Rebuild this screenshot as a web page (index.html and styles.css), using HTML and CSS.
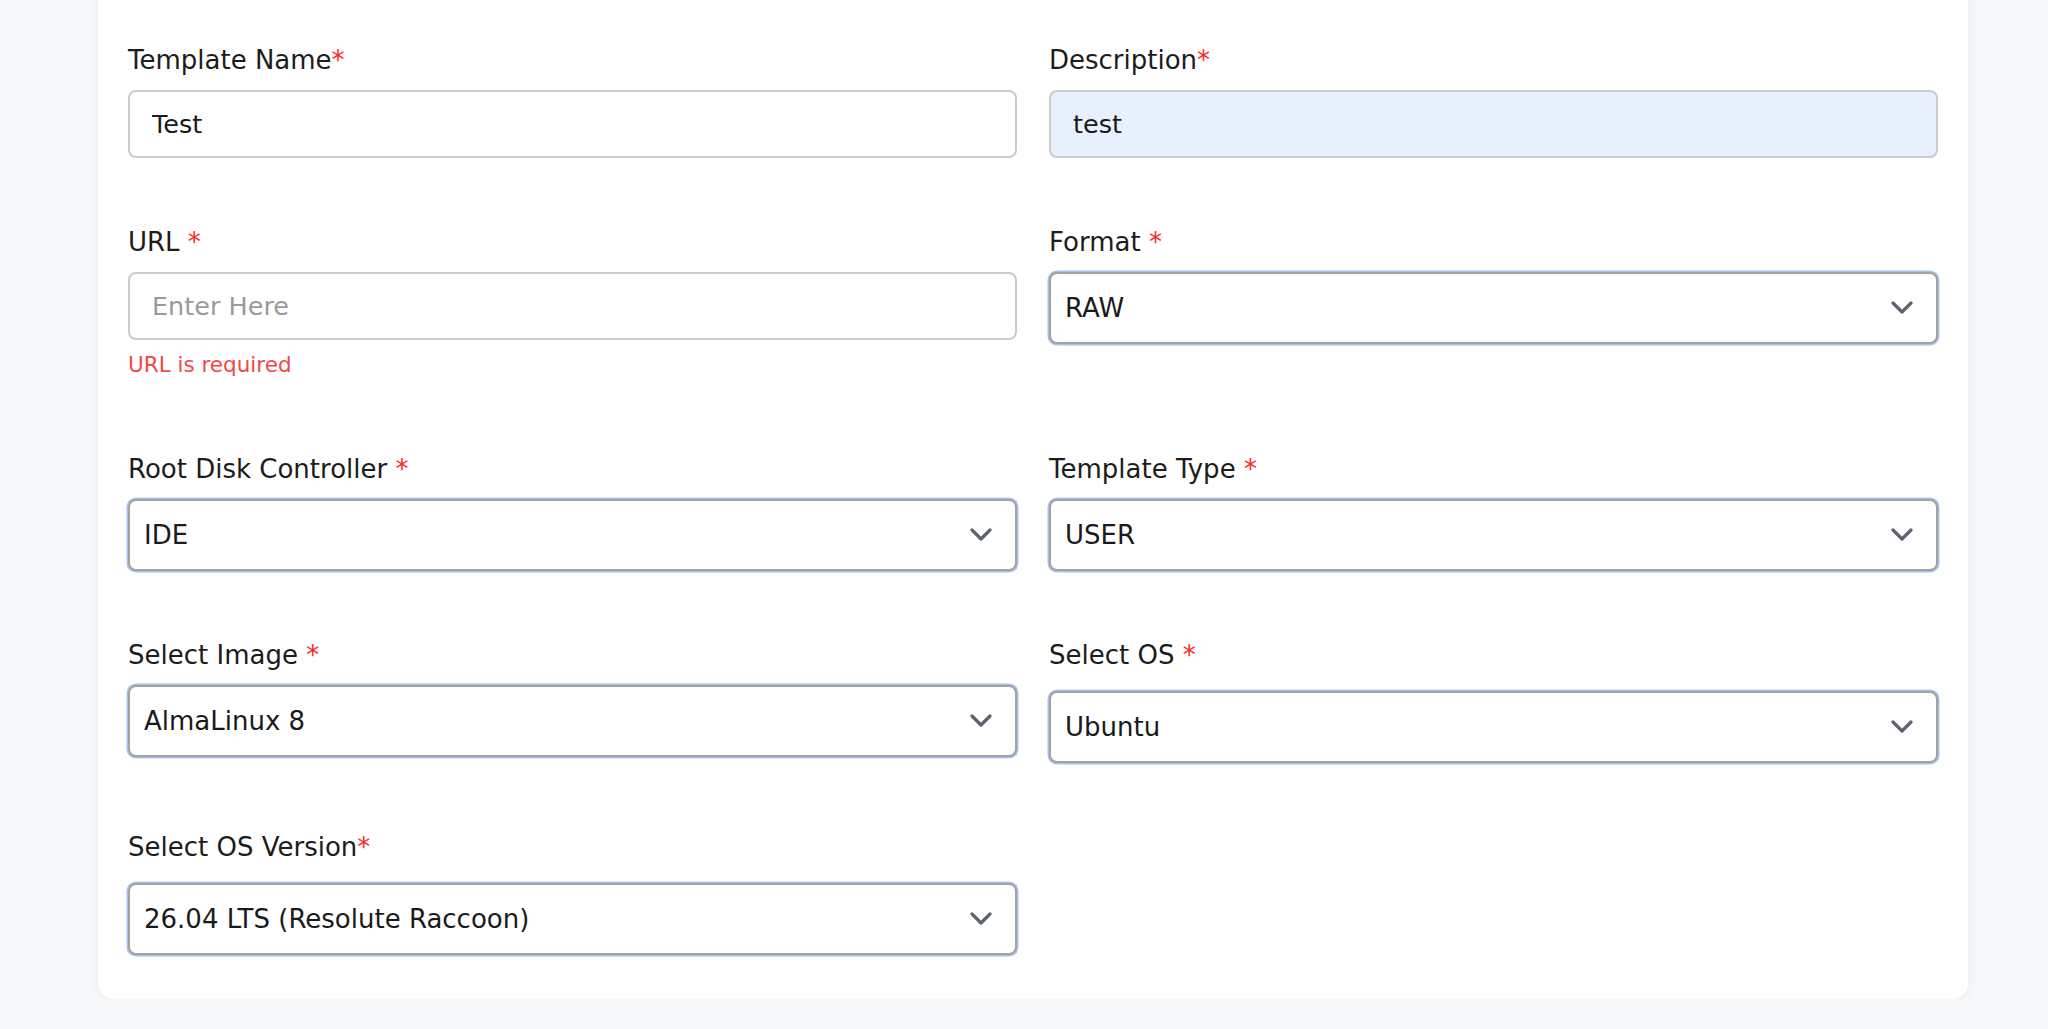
FILE: index.html
```html
<!DOCTYPE html>
<html lang="en">
<head>
<meta charset="UTF-8" />
<meta name="viewport" content="width=device-width, initial-scale=1" />
<title>Register Template</title>
<link rel="stylesheet" href="styles.css">
</head>
<body>

<div class="card">
  <form class="form-grid">

    <div class="field">
      <label for="templateName">Template Name<span class="req">*</span></label>
      <input class="text-input" type="text" id="templateName" value="Test" />
    </div>

    <div class="field">
      <label for="description">Description<span class="req">*</span></label>
      <input class="text-input autofilled" type="text" id="description" value="test" />
    </div>

    <div class="field">
      <label for="url">URL <span class="req">*</span></label>
      <input class="text-input" type="text" id="url" placeholder="Enter Here" />
      <p class="error">URL is required</p>
    </div>

    <div class="field">
      <label>Format <span class="req">*</span></label>
      <div class="select">
        <span>RAW</span>
        <svg class="chevron" width="22" height="14" viewBox="0 0 22 14"><polyline points="2,2 11,11 20,2" /></svg>
      </div>
    </div>

    <div class="field">
      <label>Root Disk Controller <span class="req">*</span></label>
      <div class="select">
        <span>IDE</span>
        <svg class="chevron" width="22" height="14" viewBox="0 0 22 14"><polyline points="2,2 11,11 20,2" /></svg>
      </div>
    </div>

    <div class="field">
      <label>Template Type <span class="req">*</span></label>
      <div class="select">
        <span>USER</span>
        <svg class="chevron" width="22" height="14" viewBox="0 0 22 14"><polyline points="2,2 11,11 20,2" /></svg>
      </div>
    </div>

    <div class="field">
      <label>Select Image <span class="req">*</span></label>
      <div class="select">
        <span>AlmaLinux 8</span>
        <svg class="chevron" width="22" height="14" viewBox="0 0 22 14"><polyline points="2,2 11,11 20,2" /></svg>
      </div>
    </div>

    <div class="field">
      <label>Select OS <span class="req">*</span></label>
      <div class="select select-spaced">
        <span>Ubuntu</span>
        <svg class="chevron" width="22" height="14" viewBox="0 0 22 14"><polyline points="2,2 11,11 20,2" /></svg>
      </div>
    </div>

    <div class="field">
      <label>Select OS Version<span class="req">*</span></label>
      <div class="select select-spaced">
        <span>26.04 LTS (Resolute Raccoon)</span>
        <svg class="chevron" width="22" height="14" viewBox="0 0 22 14"><polyline points="2,2 11,11 20,2" /></svg>
      </div>
    </div>

  </form>
</div>

</body>
</html>
```

FILE: styles.css
```css
body {
  margin: 0;
  background: #f7f8fa;
  font-family: "DejaVu Sans", sans-serif;
  color: #1c1c1c;
  overflow: hidden;
}

/* the card is scrolled a little past the top of the window */
.card {
  box-sizing: border-box;
  width: 1870px;
  margin: -20px 0 0 98px;
  padding: 62px 30px 44px;
  background: #fff;
  border-radius: 16px;
  box-shadow: 0 2px 14px rgba(20, 30, 60, 0.05);
}

.form-grid {
  display: grid;
  grid-template-columns: 1fr 1fr;
  column-gap: 32px;
  row-gap: 66px;
  align-items: start;
}

.field {
  display: flex;
  flex-direction: column;
}

label {
  font-size: 26px;
  line-height: 36px;
  margin-bottom: 12px;
  color: #1c1c1c;
}

.req {
  color: #ff2424;
}

.text-input {
  box-sizing: border-box;
  height: 68px;
  padding: 0 22px;
  font-family: inherit;
  font-size: 25.5px;
  color: #1a1a1a;
  border: 2px solid #cbcbcb;
  border-radius: 8px;
  background: #fff;
  outline: none;
}

.text-input::placeholder {
  color: #9a9a9a;
}

.text-input.autofilled {
  background: #e8f0fe;
}

.error {
  margin: 5px 0 0;
  font-size: 21.5px;
  line-height: 40px;
  color: #f04848;
}

.select {
  box-sizing: border-box;
  height: 72px;
  display: flex;
  align-items: center;
  justify-content: space-between;
  padding: 0 23px 0 14px;
  font-size: 26px;
  color: #1a1a1a;
  border: 2px solid #a2a2a2;
  border-radius: 8px;
  box-shadow: 0 0 0 1.5px #a8c2f0;
  background: #fff;
}

.select-spaced {
  margin-top: 6px;
}

.chevron polyline {
  fill: none;
  stroke: #5d6371;
  stroke-width: 3.2;
  stroke-linecap: round;
  stroke-linejoin: round;
}
```
